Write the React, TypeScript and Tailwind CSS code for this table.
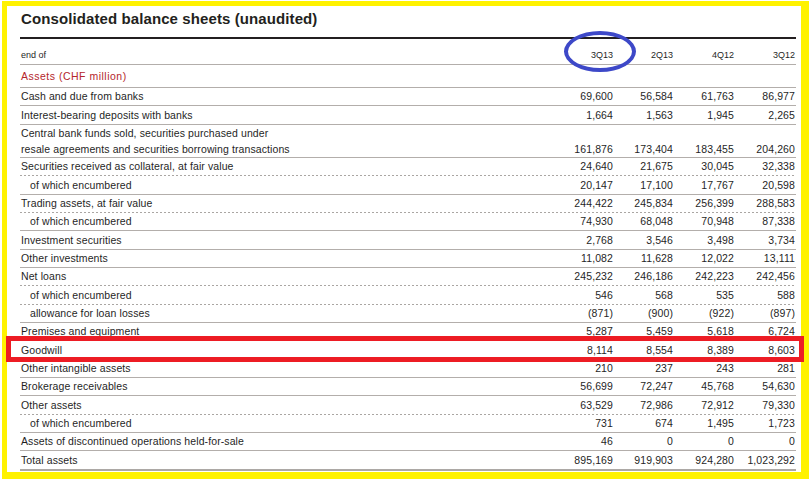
import React from "react";

type Row = {
  label: string | string[];
  v: string[];
  sep: "solid" | "dotted" | "thick";
  indent?: boolean;
  h: string;
};

const rows: Row[] = [
  { label: "Cash and due from banks", v: ["69,600", "56,584", "61,763", "86,977"], sep: "solid", h: "h-[18.35px]" },
  { label: "Interest-bearing deposits with banks", v: ["1,664", "1,563", "1,945", "2,265"], sep: "solid", h: "h-[18.35px]" },
  {
    label: ["Central bank funds sold, securities purchased under", "resale agreements and securities borrowing transactions"],
    v: ["161,876", "173,404", "183,455", "204,260"],
    sep: "solid",
    h: "h-[33.3px]",
  },
  { label: "Securities received as collateral, at fair value", v: ["24,640", "21,675", "30,045", "32,338"], sep: "dotted", h: "h-[18.35px]" },
  { label: "of which encumbered", indent: true, v: ["20,147", "17,100", "17,767", "20,598"], sep: "solid", h: "h-[18.35px]" },
  { label: "Trading assets, at fair value", v: ["244,422", "245,834", "256,399", "288,583"], sep: "dotted", h: "h-[18.35px]" },
  { label: "of which encumbered", indent: true, v: ["74,930", "68,048", "70,948", "87,338"], sep: "solid", h: "h-[18.35px]" },
  { label: "Investment securities", v: ["2,768", "3,546", "3,498", "3,734"], sep: "solid", h: "h-[18.35px]" },
  { label: "Other investments", v: ["11,082", "11,628", "12,022", "13,111"], sep: "solid", h: "h-[18.35px]" },
  { label: "Net loans", v: ["245,232", "246,186", "242,223", "242,456"], sep: "dotted", h: "h-[18.35px]" },
  { label: "of which encumbered", indent: true, v: ["546", "568", "535", "588"], sep: "dotted", h: "h-[18.35px]" },
  { label: "allowance for loan losses", indent: true, v: ["(871)", "(900)", "(922)", "(897)"], sep: "solid", h: "h-[18.35px]" },
  { label: "Premises and equipment", v: ["5,287", "5,459", "5,618", "6,724"], sep: "solid", h: "h-[18.35px]" },
  { label: "Goodwill", v: ["8,114", "8,554", "8,389", "8,603"], sep: "solid", h: "h-[18.35px]" },
  { label: "Other intangible assets", v: ["210", "237", "243", "281"], sep: "solid", h: "h-[18.35px]" },
  { label: "Brokerage receivables", v: ["56,699", "72,247", "45,768", "54,630"], sep: "solid", h: "h-[18.35px]" },
  { label: "Other assets", v: ["63,529", "72,986", "72,912", "79,330"], sep: "dotted", h: "h-[18.35px]" },
  { label: "of which encumbered", indent: true, v: ["731", "674", "1,495", "1,723"], sep: "solid", h: "h-[18.35px]" },
  { label: "Assets of discontinued operations held-for-sale", v: ["46", "0", "0", "0"], sep: "solid", h: "h-[18.35px]" },
  { label: "Total assets", v: ["895,169", "919,903", "924,280", "1,023,292"], sep: "thick", h: "h-[19.35px]" },
];

function Sep({ kind }: { kind: Row["sep"] }) {
  if (kind === "dotted")
    return (
      <div className="h-px shrink-0 bg-[linear-gradient(to_right,#aaa6a3_2px,transparent_2px)] bg-[length:4px_1px] bg-repeat-x" />
    );
  if (kind === "thick") return <div className="h-[2px] shrink-0 bg-[#aca8a5]" />;
  return <div className="h-px shrink-0 bg-[#b3aeab]" />;
}

function DataRow({ r }: { r: Row }) {
  const multi = Array.isArray(r.label);
  return (
    <div className={`flex flex-col ${r.h}`}>
      <div
        className={`grid flex-1 grid-cols-[1fr_61px_60px_61px_61px] pr-[1px] ${
          multi ? "items-end leading-[16px]" : "items-center leading-[17px]"
        }`}
      >
        <div className={`pl-[1px] ${r.indent ? "pl-[10px]" : ""}`}>
          {multi ? (
            <>
              <div>{(r.label as string[])[0]}</div>
              <div>{(r.label as string[])[1]}</div>
            </>
          ) : (
            r.label
          )}
        </div>
        {r.v.map((x, i) => (
          <div key={i} className="text-right">
            {x}
          </div>
        ))}
      </div>
      <Sep kind={r.sep} />
    </div>
  );
}

export default function App() {
  return (
    <div className="relative h-[479px] w-[809px] overflow-hidden bg-white font-['Liberation_Sans',Arial,sans-serif] text-[#1f1f1f]">
      <div className="ml-[2px] mt-[1px] h-[478px] w-[807px] border-b-[7px] border-l-[5px] border-r-[8px] border-t-[5px] border-[#fff200] bg-white pl-[13px] pr-[5px]">
        <div className="h-[31px] pl-[1px] pt-[4px] text-[15px] font-bold leading-[18px] tracking-[0.1px] text-[#231f20]">
          Consolidated balance sheets (unaudited)
        </div>
        <div className="h-[2px] bg-[#231f20]" />
        <div className="flex h-[26px] flex-col">
          <div className="grid flex-1 grid-cols-[1fr_61px_60px_61px_61px] items-end pb-[3px] pr-[1px] text-[9px] leading-[12px]">
            <div className="pl-[1px]">end of</div>
            <div className="text-right">3Q13</div>
            <div className="text-right">2Q13</div>
            <div className="text-right">4Q12</div>
            <div className="text-right">3Q12</div>
          </div>
          <Sep kind="solid" />
        </div>
        <div className="text-[10.5px] tracking-[0.1px]">
          <div className="flex h-[23px] flex-col">
            <div className="flex flex-1 items-end pb-[2px] pl-[1px] leading-[17px] tracking-[0.5px] text-[#b5262c]">
              Assets (CHF million)
            </div>
            <Sep kind="solid" />
          </div>
          {rows.map((r, i) => (
            <DataRow key={i} r={r} />
          ))}
        </div>
      </div>
      <div className="absolute left-[6px] top-[336px] h-[26px] w-[798px] border-[5px] border-[#ed1c24]" />
      <div className="absolute left-[564px] top-[31px] h-[41px] w-[72px] rounded-[50%] border-[4px] border-[#3d48c8]" />
    </div>
  );
}
